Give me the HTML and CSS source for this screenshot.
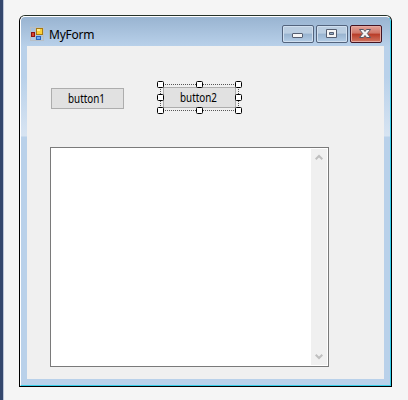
FILE: index.html
```html
<!DOCTYPE html>
<html lang="en">
<head>
<meta charset="utf-8">
<title>MyForm</title>
<link rel="stylesheet" href="styles.css">
</head>
<body>
<main class="designer">
  <section class="window">
    <div class="frame">
      <header class="titlebar">
        <svg class="app-icon" width="14" height="14" viewBox="0 0 14 14" shape-rendering="crispEdges">
          <path d="M.5.5h13v13H.5zM5.500 .5v13M.5 9.500h13" fill="none" stroke="#b9bfc5"/>
          <rect x="6" y="1" width="7" height="7" fill="#a87a10"/><rect x="7" y="2" width="5" height="5" fill="#fbd03a"/><rect x="7" y="2" width="3" height="2" fill="#ffeb94"/>
          <rect x="1" y="5" width="4" height="5" fill="#8d1413"/><rect x="2" y="6" width="2" height="3" fill="#d8432c"/>
          <rect x="6" y="9" width="5" height="4" fill="#2865bd"/><rect x="7" y="10" width="3" height="2" fill="#6ea9f4"/>
        </svg>
        <h1 class="title">MyForm</h1>
        <div class="controls">
          <button class="control" aria-label="Minimize"><svg width="28" height="14" viewBox="0 0 28 14"><rect x="8.500" y="6.500" width="10" height="4" rx=".5" fill="#f5f5f5" stroke="#555e70"/></svg></button>
          <button class="control" aria-label="Maximize"><svg width="28" height="14" viewBox="0 0 28 14"><path d="M8.500 2.500h10v8h-10z" fill="#f5f5f5" stroke="#555e70"/><path d="M11.500 5.500h4v2h-4z" fill="#91abc5" stroke="#555e70"/></svg></button>
          <button class="control close" aria-label="Close"><svg width="28" height="14" viewBox="0 0 28 14"><path d="M8.500 2.500h4l1.500 2 1.500-2h4l-3.200 4 3.200 4h-4l-1.500-2-1.500 2h-4l3.200-4z" fill="#f5f5f5" stroke="#555764"/></svg></button>
        </div>
      </header>
      <div class="client">
        <div class="button-row">
          <button class="form-button"><span>button1</span></button>
          <div class="selected">
            <button class="form-button second"><span>button2</span></button>
            <svg class="selection" width="85" height="33" viewBox="0 0 85 33">
              <path d="M4 3.500H81M4 29.500H81M3.500 4V29M81.500 4V29" fill="none" stroke="#555" stroke-dasharray="1 1" shape-rendering="crispEdges"/>
              <g fill="#fff" stroke="#000">
                <rect x=".5" y=".5" width="6" height="6" rx="1"/><rect x="39.500" y=".5" width="6" height="6" rx="1"/><rect x="78.500" y=".5" width="6" height="6" rx="1"/>
                <rect x=".5" y="13.500" width="6" height="6" rx="1"/><rect x="78.500" y="13.500" width="6" height="6" rx="1"/>
                <rect x=".5" y="26.500" width="6" height="6" rx="1"/><rect x="39.500" y="26.500" width="6" height="6" rx="1"/><rect x="78.500" y="26.500" width="6" height="6" rx="1"/>
              </g>
            </svg>
          </div>
        </div>
        <div class="textbox">
          <div class="scrollbar">
            <svg width="8" height="7" viewBox="0 0 8 7"><path d="M.7 5.300 4 2l3.300 3.300" fill="none" stroke="#bfbfbf" stroke-width="2"/></svg>
            <svg width="8" height="7" viewBox="0 0 8 7"><path d="M.7 1.700 4 5l3.300-3.300" fill="none" stroke="#bfbfbf" stroke-width="2"/></svg>
          </div>
        </div>
      </div>
    </div>
  </section>
</main>
</body>
</html>
```

FILE: styles.css
```css
* { box-sizing: border-box; }
body { margin: 0; }
button { padding: 0; font: inherit; }
svg { display: block; flex: none; }
.designer {
  width: 408px;
  height: 400px;
  padding: 15px 0 0 16px;
  border-left: 3px solid #34476d;
  background: #f5f5f5;
  box-shadow: inset 1px 0 #bcc5d8;
  font-family: "Noto Sans", "Open Sans", sans-serif;
  color: #000;
}
.window {
  width: 373px;
  height: 372px;
  border: 1px solid #000;
  border-top-color: #253129;
  border-radius: 6px 6px 0 0;
  overflow: hidden;
}
.frame {
  height: 370px;
  padding: 0 6px 6px;
  border: 1px solid #fff;
  border-right-color: #35cee9;
  border-bottom-color: #35cee9;
  border-radius: 5px 5px 0 0;
  background: linear-gradient(#99b4d1 0, #b9d1ea 30px, #b9d1ea 60px, #d7e4f2 119px, #b9d1ea 120px);
}
.titlebar {
  display: flex;
  height: 29px;
  padding: 10px 2px 0 3px;
}
.title {
  margin: 0 0 0 5px;
  font-size: 12px;
  line-height: 16px;
  font-weight: 400;
  letter-spacing: -.25px;
}
.controls { display: flex; gap: 2px; margin: -2px 0 0 auto; }
.control {
  width: 32px;
  height: 18px;
  border: 1px solid #53647d;
  border-radius: 2px;
  background: linear-gradient(#bbcee1 0 45%, #98b3cf 50%, #b4cde6);
  box-shadow: inset 0 0 0 1px #d0dfef;
}
.control svg { margin: 1px; }
.close {
  border-color: #431422;
  background: linear-gradient(#e3a298 0, #cf7668 45%, #b83b27 50%, #d07763);
  box-shadow: inset 0 0 0 1px #e5aaa1;
}
.close svg { margin-left: 0; }
.client {
  height: 333px;
  padding: 38px 0 0 23px;
  background: #f0f0f0;
}
.button-row { display: flex; gap: 36px; padding-left: 1px; height: 63px; }
.form-button {
  display: block;
  width: 73px;
  height: 21px;
  margin-top: 4px;
  border: 1px solid #adadad;
  background: #e1e1e1;
  color: #000;
  font-size: 12px;
  line-height: 19px;
}
.form-button span {
  display: inline-block;
  margin: 0 -6px 0 -8px;
  transform: scaleX(.82);
}
.selected { position: relative; width: 79px; height: 27px; }
.second { margin: 3px 0 0 3px; }
.selection { position: absolute; top: -3px; left: -3px; }
.textbox {
  display: flex;
  justify-content: flex-end;
  width: 279px;
  height: 220px;
  padding: 1px;
  border: 1px solid #7a7a7a;
  background: #fff;
}
.scrollbar {
  display: flex;
  flex-direction: column;
  align-items: center;
  justify-content: space-between;
  width: 16px;
  padding: 5px 0;
  background: #f0f0f0;
}
```
